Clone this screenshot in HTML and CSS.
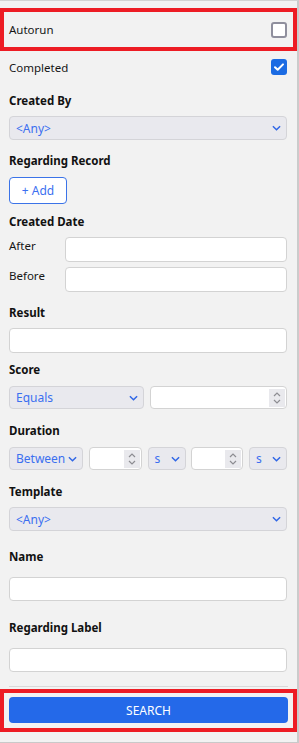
FILE: index.html
```html
<!DOCTYPE html>
<html lang="en">
<head>
    <meta charset="UTF-8">
    <meta name="viewport" content="width=device-width, initial-scale=1.0">
    <title>Search</title>
    <link rel="stylesheet" href="styles.css">
</head>
<body>
<div class="panel">
    <div class="check-row autorun">
        <span>Autorun</span>
        <span class="check"></span>
    </div>
    <div class="check-row completed">
        <span>Completed</span>
        <span class="check on">
            <svg viewBox="0 0 16 16" width="16" height="16"><path d="M4 8.2l2.7 2.6L12 5.4" fill="none" stroke="#fff" stroke-width="2" stroke-linecap="round" stroke-linejoin="round"/></svg>
        </span>
    </div>

    <div class="field created-by">
        <label>Created By</label>
        <div class="select"><span>&lt;Any&gt;</span><svg class="chev" viewBox="0 0 10 6" width="9" height="6"><path d="M1 1l4 4 4-4" fill="none" stroke="currentColor" stroke-width="1.6"/></svg></div>
    </div>

    <div class="field regarding-record">
        <label>Regarding Record</label>
        <button class="add-btn">+ Add</button>
    </div>

    <div class="field created-date">
        <label>Created Date</label>
        <div class="date-row">
            <span class="date-label">After</span>
            <div class="input"></div>
        </div>
        <div class="date-row">
            <span class="date-label">Before</span>
            <div class="input"></div>
        </div>
    </div>

    <div class="field result">
        <label>Result</label>
        <div class="input"></div>
    </div>

    <div class="field score">
        <label>Score</label>
        <div class="score-row">
            <div class="select small"><span>Equals</span><svg class="chev" viewBox="0 0 10 6" width="9" height="6"><path d="M1 1l4 4 4-4" fill="none" stroke="currentColor" stroke-width="1.6"/></svg></div>
            <div class="input number">
                <span class="spin"><svg viewBox="0 0 10 18" width="10" height="18"><path d="M2 7l3-3 3 3M2 11l3 3 3-3" fill="none" stroke="#8d8d92" stroke-width="1.2"/></svg></span>
            </div>
        </div>
    </div>

    <div class="field duration">
        <label>Duration</label>
        <div class="duration-row">
            <div class="select small"><span>Between</span><svg class="chev" viewBox="0 0 10 6" width="9" height="6"><path d="M1 1l4 4 4-4" fill="none" stroke="currentColor" stroke-width="1.6"/></svg></div>
            <div class="input number">
                <span class="spin"><svg viewBox="0 0 10 18" width="10" height="18"><path d="M2 7l3-3 3 3M2 11l3 3 3-3" fill="none" stroke="#8d8d92" stroke-width="1.2"/></svg></span>
            </div>
            <div class="select small"><span>s</span><svg class="chev" viewBox="0 0 10 6" width="9" height="6"><path d="M1 1l4 4 4-4" fill="none" stroke="currentColor" stroke-width="1.6"/></svg></div>
            <div class="input number">
                <span class="spin"><svg viewBox="0 0 10 18" width="10" height="18"><path d="M2 7l3-3 3 3M2 11l3 3 3-3" fill="none" stroke="#8d8d92" stroke-width="1.2"/></svg></span>
            </div>
            <div class="select small"><span>s</span><svg class="chev" viewBox="0 0 10 6" width="9" height="6"><path d="M1 1l4 4 4-4" fill="none" stroke="currentColor" stroke-width="1.6"/></svg></div>
        </div>
    </div>

    <div class="field template">
        <label>Template</label>
        <div class="select"><span>&lt;Any&gt;</span><svg class="chev" viewBox="0 0 10 6" width="9" height="6"><path d="M1 1l4 4 4-4" fill="none" stroke="currentColor" stroke-width="1.6"/></svg></div>
    </div>

    <div class="field name loose">
        <label>Name</label>
        <div class="input"></div>
    </div>

    <div class="field regarding-label loose">
        <label>Regarding Label</label>
        <div class="input"></div>
    </div>

    <div class="divider"></div>

    <div class="search-box">
        <button class="search-btn">SEARCH</button>
    </div>
</div>
</body>
</html>
```

FILE: styles.css
```css
body {
    margin: 0;
    padding: 0;
    background-color: #f2f2f2;
    font-family: "Noto Sans", "Open Sans", sans-serif;
    font-size: 11.5px;
    color: #161616;
}
.panel {
    width: 299px;
    height: 743px;
    box-sizing: border-box;
    padding: 7px 10px 0 9px;
    border-top: 1px solid #d3d3d3;
    border-bottom: 1px solid #c9c9c9;
    border-right: 2px solid #cbcbcb;
    background: #f2f2f2;
}

.check-row {
    display: flex;
    justify-content: space-between;
    align-items: center;
}
.autorun {
    height: 43px;
    box-sizing: border-box;
    margin: 0 -10px 0 -9px;
    padding: 0 6px 0 5px;
    border: 4px solid #ed1c24;
}
.completed {
    height: 18px;
    margin-top: 7px;
}
.check {
    width: 16px;
    height: 16px;
    box-sizing: border-box;
    border: 2px solid #8f8f9d;
    border-radius: 3px;
    background: #ffffff;
}
.check.on {
    border: none;
    background: #1b6be3;
}
.check svg {
    display: block;
}

.field {
    margin-top: 13px;
}
.field label {
    display: block;
    height: 16px;
    line-height: 16px;
    font-weight: bold;
    color: #111;
    margin-bottom: 7px;
}
.field.loose label {
    margin-bottom: 12px;
}
.created-by { margin-top: 17px; }
.regarding-record { margin-top: 13px; }
.regarding-record label { margin-bottom: 8px; }
.created-date { margin-top: 10px; }
.score { margin-top: 9px; }
.score label, .duration label { margin-bottom: 8px; }
.duration { margin-top: 14px; }
.template { margin-top: 14px; }
.name { margin-top: 18px; }
.regarding-label { margin-top: 19px; }

.select {
    display: flex;
    justify-content: space-between;
    align-items: center;
    height: 24px;
    box-sizing: border-box;
    padding: 0 5px 0 6px;
    background: #e9e9ee;
    border: 1px solid #d4d4d8;
    border-radius: 4px;
    color: #3b6ff0;
    font-size: 12px;
}
.select.small {
    height: 23px;
}
.chev {
    color: #2f66e6;
    flex-shrink: 0;
}

.input {
    height: 25px;
    box-sizing: border-box;
    background: #ffffff;
    border: 1px solid #d3d3d3;
    border-radius: 4px;
}
.name .input, .regarding-label .input {
    height: 24px;
}
.input.number {
    height: 23px;
    display: flex;
    justify-content: flex-end;
    align-items: center;
    padding-right: 1px;
}
.spin {
    width: 16px;
    height: 18px;
    display: flex;
    justify-content: center;
    align-items: center;
    background: #e9e9ed;
}

.add-btn {
    display: block;
    width: 58px;
    height: 27px;
    padding: 0;
    font-family: inherit;
    font-size: 12px;
    color: #3b6ff0;
    background: #ffffff;
    border: 1px solid #3b73e8;
    border-radius: 4px;
}

.date-row {
    display: flex;
    align-items: center;
    margin-bottom: 5px;
}
.date-row:last-child {
    margin-bottom: 0;
}
.date-label {
    width: 56px;
    flex-shrink: 0;
    margin-top: -8px;
}
.date-row .input {
    flex: 1;
}

.score-row {
    display: grid;
    grid-template-columns: 135px 137px;
    justify-content: space-between;
}
.duration-row {
    display: grid;
    grid-template-columns: 74px 53px 38px 52px 38px;
    justify-content: space-between;
}

.divider {
    height: 1px;
    margin-top: 14px;
    margin-right: -1px;
    background: #d9d9d9;
}
.search-box {
    margin: 2px -10px 0 -9px;
    padding: 4px 5px 5px 5px;
    border: 4px solid #ed1c24;
}
.search-btn {
    display: block;
    width: 100%;
    height: 26px;
    padding: 0;
    font-family: inherit;
    font-size: 12px;
    color: #ffffff;
    background: #2469e9;
    border: none;
    border-radius: 4px;
    cursor: pointer;
}
```
